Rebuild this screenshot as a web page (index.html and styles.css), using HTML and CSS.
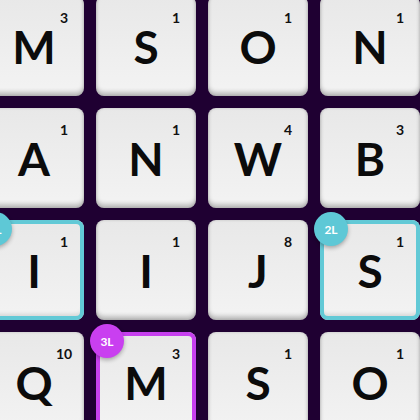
FILE: index.html
```html
<!DOCTYPE html>
<html>
<head>
<meta charset="utf-8">
<link rel="stylesheet" href="styles.css">
</head>
<body>
<div class="board">
  <div class="tile"><span class="letter">M</span><span class="num">3</span></div>
  <div class="tile"><span class="letter">S</span><span class="num">1</span></div>
  <div class="tile"><span class="letter">O</span><span class="num">1</span></div>
  <div class="tile"><span class="letter">N</span><span class="num">1</span></div>

  <div class="tile"><span class="letter">A</span><span class="num">1</span></div>
  <div class="tile"><span class="letter">N</span><span class="num">1</span></div>
  <div class="tile"><span class="letter">W</span><span class="num">4</span></div>
  <div class="tile"><span class="letter">B</span><span class="num">3</span></div>

  <div class="tile dl"><span class="badge badge-dl">2L</span><span class="letter">I</span><span class="num">1</span></div>
  <div class="tile"><span class="letter">I</span><span class="num">1</span></div>
  <div class="tile"><span class="letter">J</span><span class="num">8</span></div>
  <div class="tile dl"><span class="badge badge-dl">2L</span><span class="letter">S</span><span class="num">1</span></div>

  <div class="tile"><span class="letter">Q</span><span class="num">10</span></div>
  <div class="tile tl"><span class="badge badge-tl">3L</span><span class="letter">M</span><span class="num">3</span></div>
  <div class="tile"><span class="letter">S</span><span class="num">1</span></div>
  <div class="tile"><span class="letter">O</span><span class="num">1</span></div>
</div>
</body>
</html>
```
FILE: styles.css
```css
html, body {
  margin: 0;
  padding: 0;
  background: #1f0032;
  overflow: hidden;
  width: 420px;
  height: 420px;
}

.board {
  display: grid;
  grid-template-columns: repeat(4, 100px);
  grid-auto-rows: 100px;
  gap: 12px;
  margin-left: -16px;
  margin-top: -4px;
  font-family: Lato, "Noto Sans", sans-serif;
}

.tile {
  position: relative;
  border-radius: 8px;
  background: linear-gradient(#e8e8e8, #f3f3f3);
  box-shadow: inset 0 -4px 4px rgba(0, 0, 0, 0.22), inset 0 0 3px rgba(0, 0, 0, 0.18);
  display: flex;
  align-items: center;
  justify-content: center;
}

.tile.dl {
  box-shadow: inset 0 0 0 4px #62c9d6, inset 0 -6px 4px rgba(0, 0, 0, 0.12);
}

.tile.tl {
  box-shadow: inset 0 0 0 4px #c740ef, inset 0 -6px 4px rgba(0, 0, 0, 0.12);
}

.letter {
  font-size: 46px;
  font-weight: 700;
  color: #0b0b0b;
  line-height: 1;
  margin-top: 2px;
}

.num {
  position: absolute;
  left: 68px;
  top: 13px;
  width: 24px;
  text-align: center;
  font-size: 14px;
  font-weight: 700;
  line-height: 18px;
  color: #111;
}

.badge {
  position: absolute;
  left: -6px;
  top: -8px;
  width: 34px;
  height: 34px;
  border-radius: 50%;
  color: #fff;
  font-size: 12px;
  font-weight: 700;
  display: flex;
  align-items: center;
  justify-content: center;
  box-shadow: 0 2px 4px rgba(0, 0, 0, 0.3);
  z-index: 1;
}

.badge-dl {
  background: #5ec8d6;
}

.badge-tl {
  background: #c93ff0;
}
```
